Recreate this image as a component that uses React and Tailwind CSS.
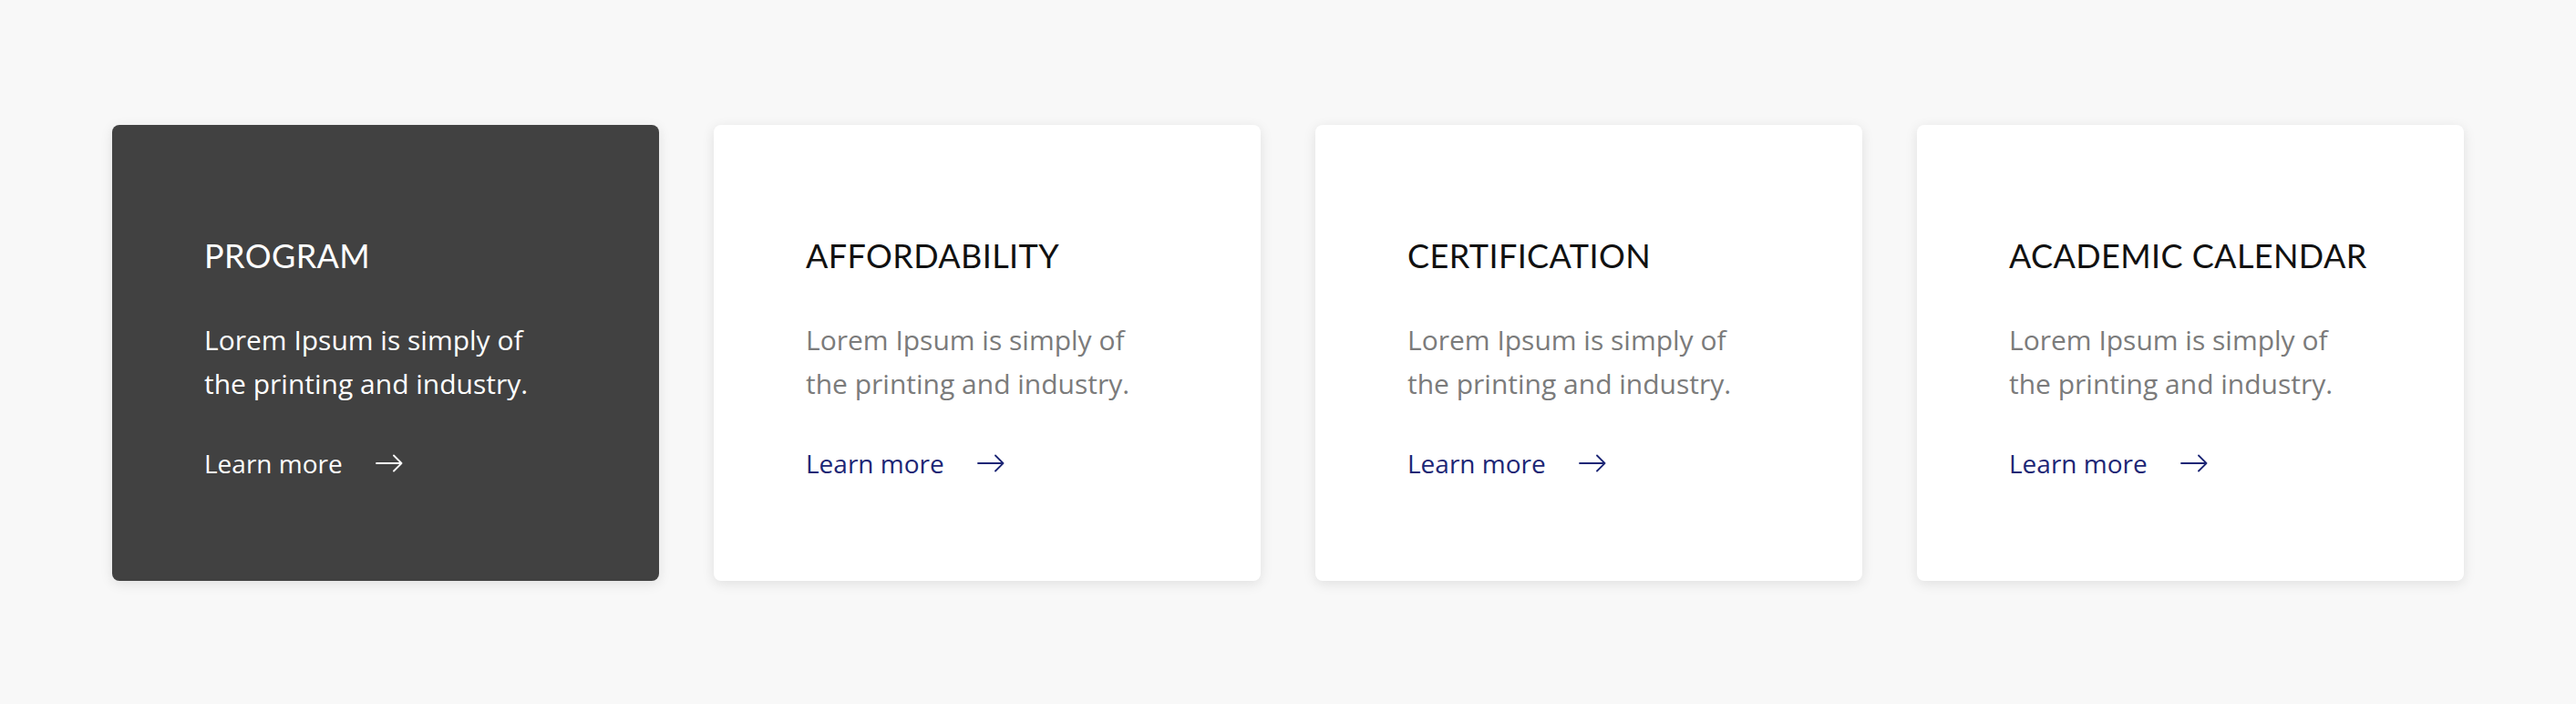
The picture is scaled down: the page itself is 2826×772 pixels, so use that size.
const items = [
  { title: 'PROGRAM', dark: true },
  { title: 'AFFORDABILITY' },
  { title: 'CERTIFICATION' },
  { title: 'ACADEMIC CALENDAR' },
];

function Arrow({ className }) {
  return (
    <svg width="30" height="20" viewBox="0 0 30 20" fill="none" className={className}>
      <path d="M1 10H28.5M20 1.5L28.5 10L20 18.5" stroke="currentColor" strokeWidth="1.8" strokeLinecap="round" strokeLinejoin="round" />
    </svg>
  );
}

function Card({ title, dark }) {
  return (
    <div
      className={`w-[600px] h-[500px] rounded-[8px] pl-[101px] pt-[121px] shadow-[0_3px_14px_rgba(0,0,0,0.1)] ${
        dark ? 'bg-[#414141]' : 'bg-white'
      }`}
    >
      <h3
        className={`text-[36px] leading-[44px] tracking-[0.4px] font-normal font-['Lato',sans-serif] ${
          dark ? 'text-white' : 'text-[#111111]'
        }`}
      >
        {title}
      </h3>
      <p
        className={`mt-[47px] max-w-[380px] text-[30px] leading-[48px] font-['Open_Sans',sans-serif] ${
          dark ? 'text-white' : 'text-[#7b7b7b]'
        }`}
      >
        Lorem Ipsum is simply of the printing and industry.
      </p>
      <a
        href="#"
        className={`mt-[39px] inline-flex items-center gap-[36px] text-[28px] leading-[48px] font-['Open_Sans',sans-serif] ${
          dark ? 'text-white' : 'text-[#1c2675]'
        }`}
      >
        Learn more
        <Arrow />
      </a>
    </div>
  );
}

export default function App() {
  return (
    <div className="min-h-[772px] bg-[#f8f8f8] py-[137px] flex justify-center gap-[60px]">
      {items.map((item) => (
        <Card key={item.title} {...item} />
      ))}
    </div>
  );
}
